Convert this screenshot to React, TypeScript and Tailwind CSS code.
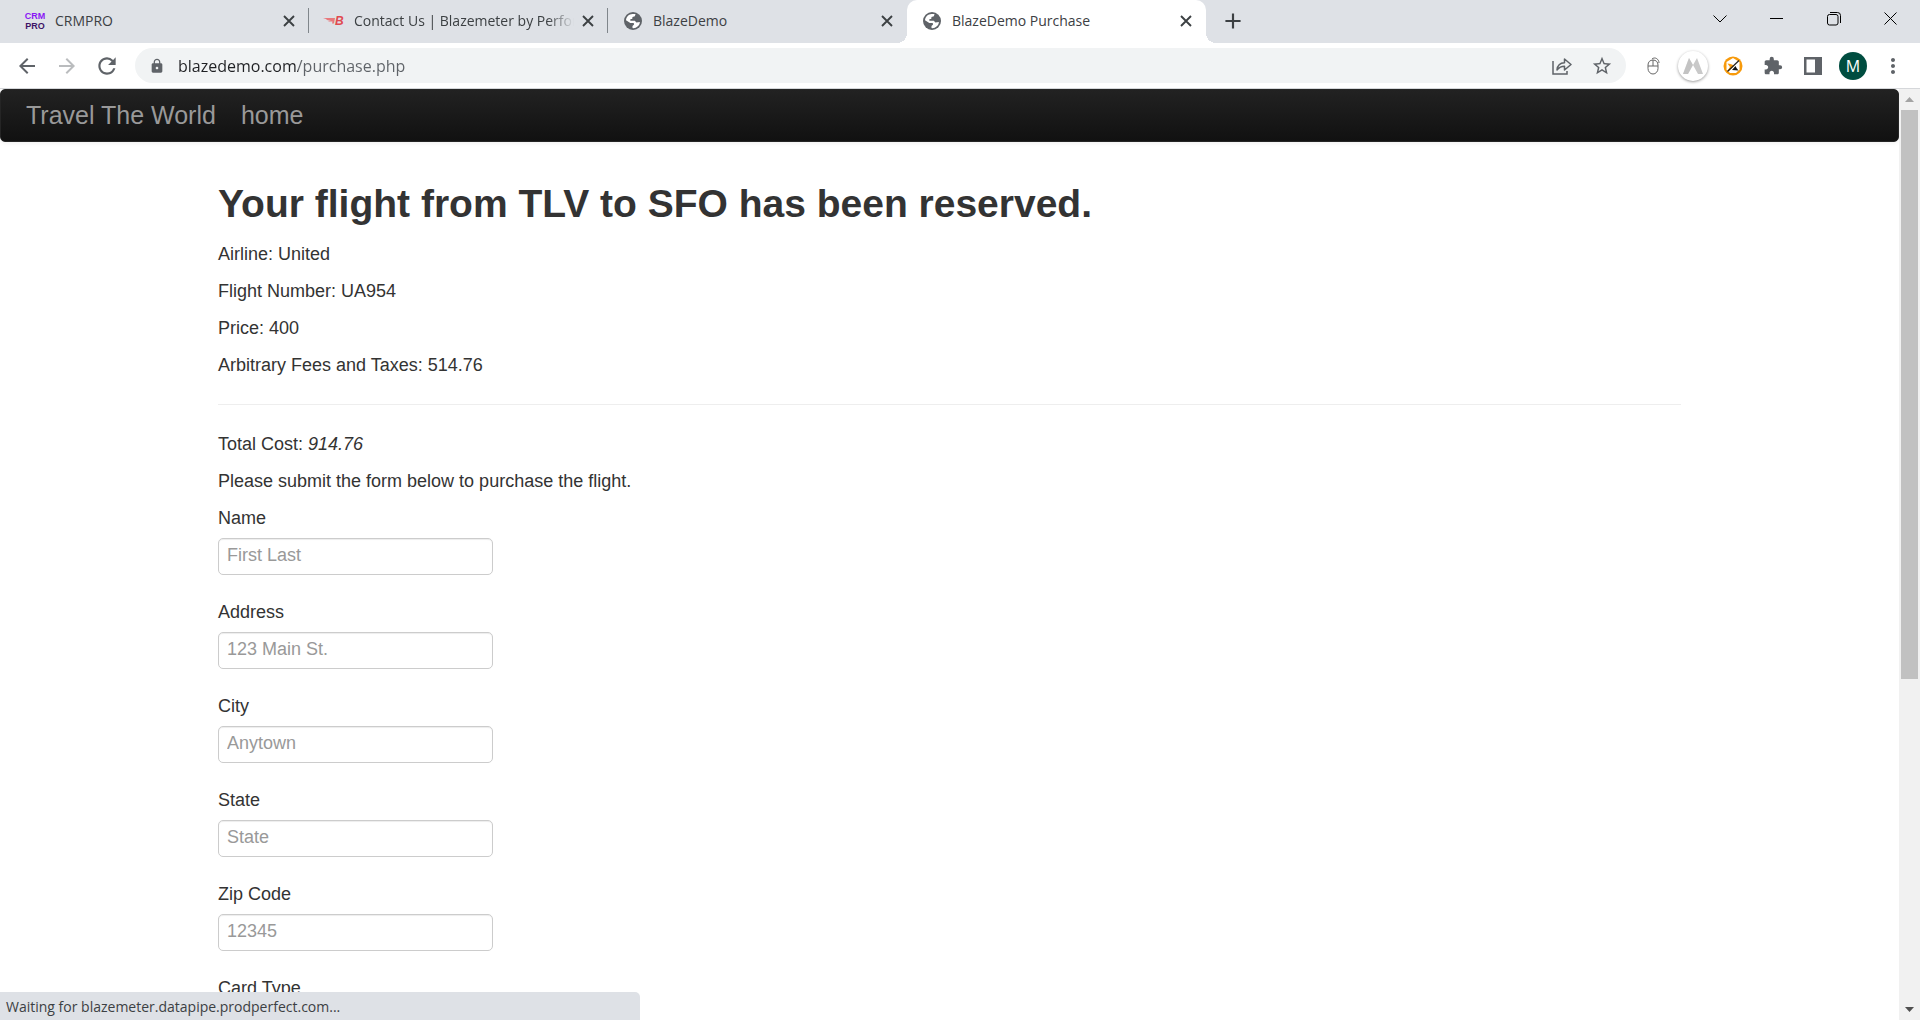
import React from "react";
import { MdArrowBack, MdArrowForward, MdRefresh, MdLock, MdStarBorder, MdExtension, MdMoreVert, MdAdd } from "react-icons/md";

function CrmIcon() {
  return (
    <span className="flex shrink-0 flex-col items-center font-['Liberation_Sans',sans-serif] text-[9px] leading-[10px] font-bold">
      <span className="text-[#8a17f5]">CRM</span>
      <span className="text-[#3d1466]">PRO</span>
    </span>
  );
}

function BlazeIcon() {
  return (
    <svg width="22" height="12" viewBox="0 0 22 12" className="shrink-0 font-['Liberation_Sans',sans-serif] text-[12px] font-bold italic">
      <path d="M0 3h12l-1 5.500H9l.5-2H6L5 6h3L4 5 3 4z" fill="#e8787c" />
      <text x="12" y="10" fill="#e04a50">B</text>
    </svg>
  );
}

function Globe() {
  return (
    <svg width="18" height="18" viewBox="0 0 18 18" className="shrink-0">
      <circle cx="9" cy="9" r="9" fill="#5f6368" />
      <path d="M8.500 2h3l-.6 2.200-2.400.8-.3 2H6.500l-.2 1.800h4.500l1.600 1.700 3.500-.4c-.2 3.400-3.200 6.100-6.600 6.100l-.8-.1v-2l1.600-1.500-.4-1.500H6.300L2 8.300C2.300 4.800 5 2.100 8.500 2z" fill="#fff" />
      <path d="M2 9.500 6 12l1 4C4 15 2 12.500 2 9.500z" fill="#5f6368" />
    </svg>
  );
}

type TabProps = { icon: React.ReactNode; title: string; active?: boolean; divider?: boolean; fade?: boolean };

function Tab({ icon, title, active, divider, fade }: TabProps) {
  return (
    <div className={"relative flex h-full w-[299px] items-center pr-2.5 pb-0.5 pl-[13px] " + (active ? "rounded-t-[10px] bg-white" : "")}>
      {active && (
        <>
          <span className="absolute bottom-0 -left-[10px] size-[10px] bg-[radial-gradient(circle_at_0_0,#dee1e6_10px,#fff_10px)]" />
          <span className="absolute -right-[10px] bottom-0 size-[10px] bg-[radial-gradient(circle_at_100%_0,#dee1e6_10px,#fff_10px)]" />
        </>
      )}
      <span className="flex w-6 shrink-0 justify-center">{icon}</span>
      <span className={"ml-2 min-w-0 flex-1 overflow-hidden text-[14px] whitespace-nowrap text-[#3c4043] " + (fade ? "[mask-image:linear-gradient(to_right,#000_88%,transparent)]" : "")}>{title}</span>
      <button aria-label={"Close " + title} className="ml-1 flex size-5 shrink-0 items-center justify-center">
        <svg width="12" height="12" viewBox="0 0 12 12" fill="none" stroke="#3c4043" strokeWidth="1.900"><path d="m1 1 10 10M11 1 1 11" /></svg>
      </button>
      {divider && <span className="absolute right-0 h-[25px] w-px bg-[#80868b]" />}
    </div>
  );
}

function WindowControls() {
  return (
    <div className="ml-auto flex h-[37px] pr-px text-black">
      <button aria-label="Search tabs" className="flex w-[57px] items-center justify-center">
        <svg width="14" height="8" viewBox="0 0 14 8" fill="none" stroke="currentColor"><path d="M.5.500 7 7 13.500.500" /></svg>
      </button>
      <button aria-label="Minimize" className="flex w-[57px] items-center justify-center">
        <span className="h-px w-[13px] bg-black" />
      </button>
      <button aria-label="Restore" className="flex w-[57px] items-center justify-center">
        <svg width="14" height="14" viewBox="0 0 14 14" fill="none" stroke="currentColor"><rect x=".5" y="2.500" width="10.500" height="10.500" rx="2" /><path d="M3 .5h7.500a3 3 0 0 1 3 3V11" /></svg>
      </button>
      <button aria-label="Close window" className="flex w-[57px] items-center justify-center">
        <svg width="13" height="13" viewBox="0 0 13 13" fill="none" stroke="currentColor"><path d="m.5.500 12 12m0-12-12 12" /></svg>
      </button>
    </div>
  );
}

const iconButton = "flex w-10 shrink-0 items-center justify-center";

function Toolbar() {
  return (
    <div className="flex h-[45px] shrink-0 items-center bg-white pl-[7px] text-[#5f6368]">
      <button aria-label="Back" className={iconButton}><MdArrowBack className="size-6" /></button>
      <button aria-label="Forward" className={iconButton}><MdArrowForward className="size-6 text-[#babcbe]" /></button>
      <button aria-label="Reload" className={iconButton}><MdRefresh className="size-[26px]" /></button>
      <div className="ml-2 flex h-[35px] flex-1 items-center rounded-full bg-[#f1f3f4] pr-1 pl-3.5">
        <MdLock className="size-4 shrink-0" />
        <input
          aria-label="Address bar"
          defaultValue="blazedemo.com/purchase.php"
          className="ml-[13px] min-w-0 flex-1 bg-linear-to-r from-[#202124] from-[120px] to-[#5f6368] to-[120px] bg-clip-text text-[16px] text-transparent outline-none"
        />
        <button aria-label="Share" className={iconButton}>
          <svg width="20" height="18" viewBox="0 0 20 18" fill="none" stroke="currentColor" strokeWidth="1.500"><path d="M1 4v13h14v-3" /><path d="M5 13c.4-4.500 3-7 7.500-7.200V2L19 7.500 12.500 13V9.300C9 9.300 7 10.500 5 13z" strokeLinejoin="round" /></svg>
        </button>
        <button aria-label="Bookmark" className={iconButton}><MdStarBorder className="size-[22px]" /></button>
      </div>
      <div className="flex px-[7px]">
        <button aria-label="Mouse extension" className={iconButton}>
          <svg width="13" height="18" viewBox="0 0 13 18" fill="none" stroke="#666"><path d="M6 3c3 0 5 2 5 5v3.500a5 5.500 0 0 1-10 0V8c0-3 2-5 5-5zM1 9h10M6 3v6M5 2C8-.5 12 2 12 6" /></svg>
        </button>
        <button aria-label="MA extension" className={iconButton}>
          <span className="flex size-[30px] shrink-0 items-center justify-center rounded-full bg-white shadow-[0_1px_3px_rgba(0,0,0,0.4)]">
            <svg width="20" height="16" viewBox="0 0 20 16"><path d="M0 16 6 0l4 7 4-7 6 16h-5l-5-9-5 9z" fill="#c9c9c9" /><path d="m6 0 4 7-5 9H0z" fill="#b8b8b8" opacity=".35" /></svg>
          </span>
        </button>
        <button aria-label="Blocker extension" className={iconButton}>
          <svg width="20" height="20" viewBox="0 0 20 20"><circle cx="10" cy="10" r="9.500" fill="#f79a0b" /><path d="M10 2 16.500 6v7.500L13 17H7l-3.500-3.500V6z" fill="#fff" /><path d="m4.500 7.500 3 .5 2.500 1 1.500.5-5 5H4.500L7 11z" fill="#f79a0b" /><path d="m9 14 3.500-4 1 2 2 2.500z" fill="#111" /><path d="M4.500 15.500 16 4.500" stroke="#222" strokeWidth="1.200" /></svg>
        </button>
        <button aria-label="Extensions" className={iconButton}><MdExtension className="size-5" /></button>
        <button aria-label="Side panel" className={iconButton}>
          <svg width="18" height="18" viewBox="0 0 18 18"><path d="M0 0h18v18H0zM2.500 2.500v13H11v-13z" fill="currentColor" fillRule="evenodd" /></svg>
        </button>
        <button aria-label="Profile" className={iconButton}>
          <span className="flex size-7 shrink-0 items-center justify-center rounded-full bg-[#004d40] text-[16px] text-white">M</span>
        </button>
        <button aria-label="Menu" className={iconButton}><MdMoreVert className="size-6" /></button>
      </div>
    </div>
  );
}

const fields = [
  { id: "name", label: "Name", hint: "First Last" },
  { id: "address", label: "Address", hint: "123 Main St." },
  { id: "city", label: "City", hint: "Anytown" },
  { id: "state", label: "State", hint: "State" },
  { id: "zip", label: "Zip Code", hint: "12345" },
];

function PurchasePage() {
  return (
    <main className="min-w-0 flex-1 overflow-hidden bg-white font-['Liberation_Sans',Arial,sans-serif] text-[18px] leading-[25px] text-[#333]">
      <nav className="flex h-[53px] items-center gap-[25px] rounded-[5px] border border-[#252525] bg-linear-to-b from-[#222] to-[#111] px-[25px] text-[25px] text-[#999] shadow-[0_1px_5px_rgba(0,0,0,0.07)]">
        <a href="#travel">Travel The World</a>
        <a href="#home">home</a>
      </nav>
      <div className="mx-auto max-w-[1463px] pt-[37px]">
        <h2 className="mb-[13px] text-[39px] leading-[50px] font-bold">Your flight from TLV to SFO has been reserved.</h2>
        <div className="flex flex-col gap-3">
          <p>Airline: United</p>
          <p>Flight Number: UA954</p>
          <p>Price: 400</p>
          <p>Arbitrary Fees and Taxes: 514.76</p>
        </div>
        <hr className="mt-[26px] mb-[27px] border-[#eee]" />
        <div className="flex flex-col gap-3">
          <p>Total Cost: <em>914.76</em></p>
          <p>Please submit the form below to purchase the flight.</p>
          <form className="flex flex-col">
            {fields.map((f) => (
              <div key={f.id} className="mb-[25px] flex flex-col items-start">
                <label htmlFor={f.id} className="mb-[7px]">{f.label}</label>
                <input id={f.id} placeholder={f.hint} className="h-[37px] w-[275px] rounded-[5px] border border-[#ccc] px-2 pb-0.5 shadow-[inset_0_1px_1px_rgba(0,0,0,0.075)] placeholder:text-[#999]" />
              </div>
            ))}
            <label htmlFor="card">Card Type</label>
            <select id="card" className="mt-[7px] h-[37px] w-[275px] rounded-[5px] border border-[#ccc]" />
          </form>
        </div>
      </div>
    </main>
  );
}

function ScrollTrack() {
  return (
    <div className="flex w-[21px] shrink-0 flex-col items-center bg-[#f1f1f1]">
      <button aria-label="Scroll up" className="flex h-[21px] shrink-0 items-center"><svg width="9" height="5" viewBox="0 0 9 5"><path d="M4.500 0 9 5H0z" fill="#a3a3a3" /></svg></button>
      <div className="flex w-full flex-1 justify-center"><span className="h-[64%] w-[17px] bg-[#c1c1c1]" /></div>
      <button aria-label="Scroll down" className="flex h-[21px] shrink-0 items-center"><svg width="9" height="5" viewBox="0 0 9 5"><path d="M0 0h9L4.500 5z" fill="#505050" /></svg></button>
    </div>
  );
}

export default function App() {
  return (
    <div className="relative flex h-screen flex-col overflow-hidden font-['Open_Sans','Noto_Sans',sans-serif]">
      <header className="flex h-[43px] shrink-0 bg-[#dee1e6] pl-2.5">
        <div className="flex items-center">
          <Tab icon={<CrmIcon />} title="CRMPRO" divider />
          <Tab icon={<BlazeIcon />} title="Contact Us | Blazemeter by Perforce" divider fade />
          <Tab icon={<Globe />} title="BlazeDemo" />
          <Tab icon={<Globe />} title="BlazeDemo Purchase" active />
        </div>
        <button aria-label="New tab" className="ml-2.5 flex items-center px-1 pb-0.5"><MdAdd className="size-[26px] text-[#3c4043]" /></button>
        <WindowControls />
      </header>
      <Toolbar />
      <div className="flex min-h-0 flex-1 border-t border-[#d5d7da]">
        <PurchasePage />
        <ScrollTrack />
      </div>
      <div role="status" className="absolute bottom-0 left-0 flex h-7 w-1/3 items-center rounded-tr-[5px] bg-[#dee1e6] px-1.5 text-[14px] text-[#3c4043]">Waiting for blazemeter.datapipe.prodperfect.com...</div>
    </div>
  );
}
